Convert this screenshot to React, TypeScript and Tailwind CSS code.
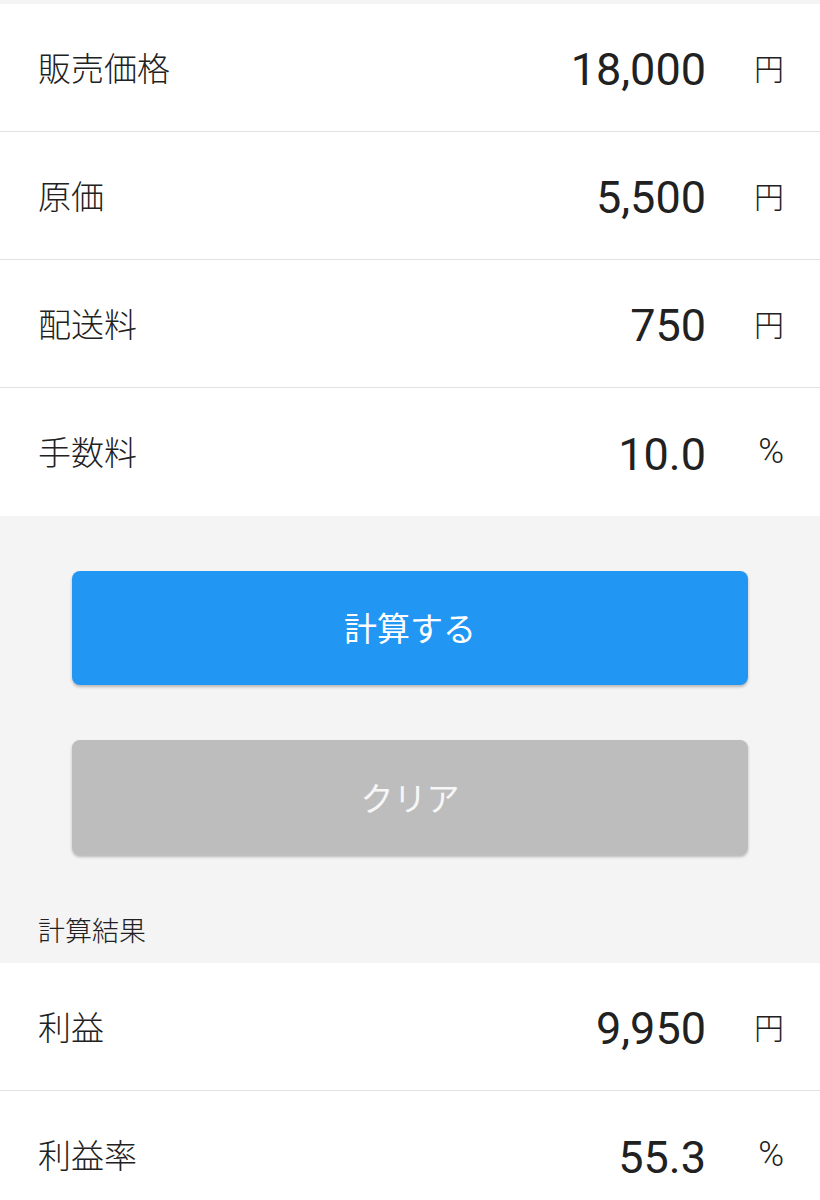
import React from "react";

function Row({ label, value, unit, last }: { label: string; value: string; unit: string; last?: boolean }) {
  const isPct = unit === "%";
  return (
    <div
      className={`flex h-[128px] items-center bg-white pl-[38px] pr-[36px] ${
        last ? "" : "border-b border-[#e2e2e2]"
      }`}
    >
      <div className="flex-1 font-['Noto_Sans_CJK_JP',sans-serif] text-[33px] font-light text-[#212121]">
        {label}
      </div>
      <div className="mt-[5px] text-right font-['Roboto',sans-serif] text-[45px] text-[#212121]">{value}</div>
      {isPct ? (
        <div className="w-[78px] text-right font-['Roboto',sans-serif] text-[35px] font-light text-[#212121]">
          %
        </div>
      ) : (
        <div className="w-[78px] text-right font-['Noto_Sans_CJK_JP',sans-serif] text-[30px] font-light text-[#212121]">
          円
        </div>
      )}
    </div>
  );
}

export default function App() {
  return (
    <div className="min-h-[1200px] w-[820px] bg-[#f4f4f4] pt-[4px]">
      <Row label="販売価格" value="18,000" unit="円" />
      <Row label="原価" value="5,500" unit="円" />
      <Row label="配送料" value="750" unit="円" />
      <Row label="手数料" value="10.0" unit="%" last />
      <div className="flex flex-col bg-[#f4f4f4] pt-[55px]">
        <button className="mx-[72px] flex h-[114px] items-center justify-center rounded-[8px] bg-[#2196f3] font-['Noto_Sans_CJK_JP',sans-serif] text-[33px] text-white shadow-[0_2px_3px_rgba(0,0,0,0.25)]">
          計算する
        </button>
        <button className="mx-[72px] mt-[55px] flex h-[115px] items-center justify-center rounded-[8px] bg-[#bdbdbd] font-['Noto_Sans_CJK_JP',sans-serif] text-[33px] text-[#f7f7f7] shadow-[0_2px_3px_rgba(0,0,0,0.25)]">
          クリア
        </button>
        <div className="mt-[56px] mb-[14px] h-[38px] pl-[38px] font-['Noto_Sans_CJK_JP',sans-serif] text-[27px] font-light leading-[38px] text-[#212121]">
          計算結果
        </div>
      </div>
      <Row label="利益" value="9,950" unit="円" />
      <Row label="利益率" value="55.3" unit="%" last />
    </div>
  );
}
